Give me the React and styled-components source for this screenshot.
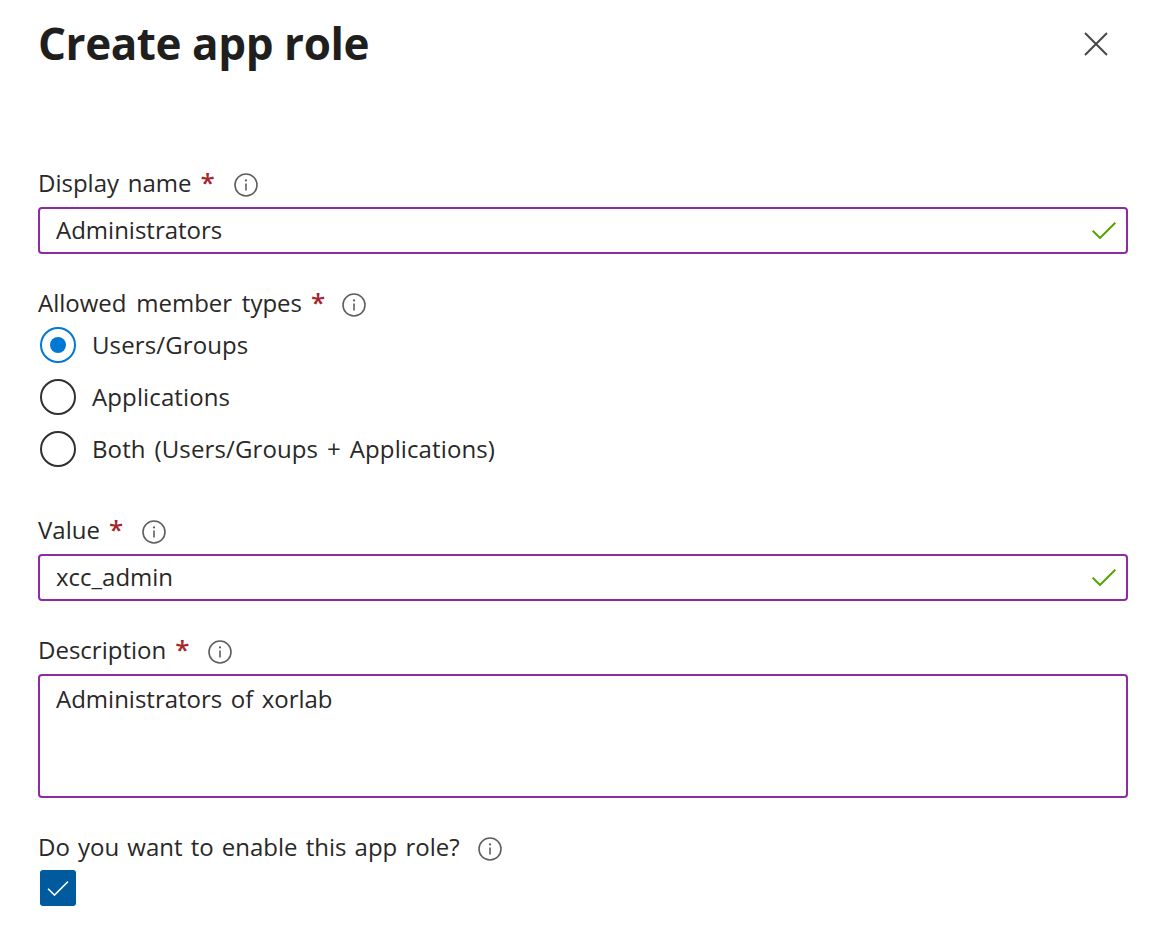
import React from 'react';
import styled, { createGlobalStyle } from 'styled-components';

const GlobalStyle = createGlobalStyle`
  html, body {
    margin: 0;
    background: #fff;
  }
  body {
    font-family: 'Open Sans', 'Noto Sans', sans-serif;
    color: #292827;
  }
`;

const Page = styled.div`
  width: 1156px;
  height: 952px;
  box-sizing: border-box;
  padding: 11px 28px 0 38px;
  overflow: hidden;
`;

const Header = styled.header`
  display: flex;
  align-items: center;
  justify-content: space-between;
  height: 64px;
  margin-bottom: 92px;
`;

const Title = styled.h1`
  margin: 0;
  font-size: 44px;
  line-height: 64px;
  font-weight: 700;
  letter-spacing: -0.43px;
  color: #201f1e;
`;

const CloseButton = styled.button`
  display: flex;
  padding: 0;
  margin: 2px 19px 0 0;
  border: 0;
  background: none;
  color: #484644;
`;

const Field = styled.div`
  margin-bottom: ${(props) => props.$gap || 0}px;
`;

const Label = styled.label`
  display: flex;
  align-items: center;
  height: 34px;
  padding-bottom: 4px;
  box-sizing: border-box;
  font-size: 24px;
  word-spacing: ${(props) => props.$words || 2.5}px;
`;

const Star = styled.span`
  margin-left: 9px;
  color: #a4262c;
  font-size: 26px;
  font-weight: 600;
`;

const InfoBadge = styled.span`
  display: flex;
  margin-top: 6px;
  margin-left: ${(props) => props.$left || 19}px;
  color: #605e5c;
`;

const InputBox = styled.div`
  position: relative;
  margin-top: 6px;
`;

const TextInput = styled.input`
  display: block;
  width: 100%;
  height: 47px;
  box-sizing: border-box;
  padding: 0 16px 3px;
  border: 2px solid #8c2ba3;
  border-radius: 4px;
  outline: 0;
  font: inherit;
  font-size: 24px;
  color: #292827;
`;

const TextArea = styled.textarea`
  display: block;
  width: 100%;
  height: 124px;
  box-sizing: border-box;
  padding: 6px 16px;
  border: 2px solid #8c2ba3;
  border-radius: 4px;
  outline: 0;
  resize: none;
  font: inherit;
  font-size: 24px;
  line-height: 34px;
  word-spacing: 2.2px;
  color: #292827;
`;

const ValidMark = styled.span`
  position: absolute;
  right: 12px;
  top: 15px;
  display: flex;
  color: #57a300;
`;

const RadioGroup = styled.div`
  display: flex;
  flex-direction: column;
  gap: 16px;
  margin-top: 6px;
`;

const RadioRow = styled.div`
  display: flex;
  align-items: center;
  gap: 16px;
  height: 36px;
  font-size: 24px;
  letter-spacing: 0.12px;
  word-spacing: 2.5px;
`;

const RadioText = styled.span`
  margin-top: -2px;
`;

const RadioCircle = styled.span`
  display: flex;
  align-items: center;
  justify-content: center;
  width: 36px;
  height: 36px;
  box-sizing: border-box;
  margin-left: 2px;
  border-radius: 50%;
  border: 2px solid ${(props) => (props.$checked ? '#0078d4' : '#323130')};

  &::after {
    content: '';
    display: ${(props) => (props.$checked ? 'block' : 'none')};
    width: 16px;
    height: 16px;
    border-radius: 50%;
    background: #0078d4;
  }
`;

const CheckBox = styled.span`
  display: flex;
  align-items: center;
  justify-content: center;
  width: 36px;
  height: 36px;
  margin: 5px 0 0 2px;
  border-radius: 3px;
  background: #005a9e;
  color: #fff;
`;

const InfoIcon = () => (
  <svg width="24" height="24" viewBox="0 0 24 24" fill="none" stroke="currentColor">
    <circle cx="12" cy="12" r="11" strokeWidth="1.6" />
    <path d="M12 10.5v7" strokeWidth="1.6" />
    <circle cx="12" cy="7.4" r="1.1" fill="currentColor" stroke="none" />
  </svg>
);

const Check = ({ width = 24, height = 17, weight = 2 }) => (
  <svg width={width} height={height} viewBox="0 0 24 17" fill="none" stroke="currentColor" strokeWidth={weight}>
    <path d="M0.7 8.7 L8 16 L23.3 0.7" />
  </svg>
);

const Required = () => <Star>*</Star>;

export default function App() {
  return (
    <>
      <GlobalStyle />
      <Page>
        <Header>
          <Title>Create app role</Title>
          <CloseButton aria-label="Close">
            <svg width="26" height="26" viewBox="0 0 26 26" fill="none" stroke="currentColor" strokeWidth="2">
              <path d="M2 2 L24 24 M24 2 L2 24" />
            </svg>
          </CloseButton>
        </Header>

        <Field $gap={33}>
          <Label>
            Display name<Required />
            <InfoBadge><InfoIcon /></InfoBadge>
          </Label>
          <InputBox>
            <TextInput readOnly value="Administrators" />
            <ValidMark><Check /></ValidMark>
          </InputBox>
        </Field>

        <Field $gap={47}>
          <Label $words={3.5}>
            Allowed member types<Required />
            <InfoBadge $left={17}><InfoIcon /></InfoBadge>
          </Label>
          <RadioGroup>
            <RadioRow><RadioCircle $checked /><RadioText>Users/Groups</RadioText></RadioRow>
            <RadioRow><RadioCircle /><RadioText>Applications</RadioText></RadioRow>
            <RadioRow><RadioCircle /><RadioText>Both (Users/Groups + Applications)</RadioText></RadioRow>
          </RadioGroup>
        </Field>

        <Field $gap={33}>
          <Label>
            Value<Required />
            <InfoBadge><InfoIcon /></InfoBadge>
          </Label>
          <InputBox>
            <TextInput readOnly value="xcc_admin" />
            <ValidMark><Check /></ValidMark>
          </InputBox>
        </Field>

        <Field $gap={33}>
          <Label>
            Description<Required />
            <InfoBadge><InfoIcon /></InfoBadge>
          </Label>
          <InputBox>
            <TextArea readOnly value="Administrators of xorlab" />
          </InputBox>
        </Field>

        <Field>
          <Label $words={1.9}>
            Do you want to enable this app role?
            <InfoBadge $left={18}><InfoIcon /></InfoBadge>
          </Label>
          <CheckBox><Check width={22} height={15} weight={1.7} /></CheckBox>
        </Field>
      </Page>
    </>
  );
}
